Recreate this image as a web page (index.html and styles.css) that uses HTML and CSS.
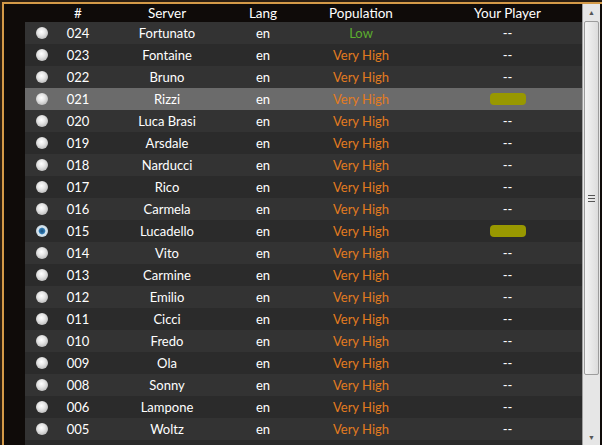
FILE: index.html
```html
<!DOCTYPE html>
<html lang="en">
<head>
    <meta charset="UTF-8">
    <title>Server list</title>
    <link rel="stylesheet" href="styles.css">
</head>
<body>
    <div class="frame">
        <div class="list">
            <div class="row head">
                <div class="c-radio"></div>
                <div class="c-num">#</div>
                <div class="c-server">Server</div>
                <div class="c-lang">Lang</div>
                <div class="c-pop">Population</div>
                <div class="c-player">Your Player</div>
            </div>
            <div class="rows">
                <div class="row"><div class="c-radio"><span class="radio"></span></div><div class="c-num">024</div><div class="c-server">Fortunato</div><div class="c-lang">en</div><div class="c-pop low">Low</div><div class="c-player">--</div></div>
                <div class="row"><div class="c-radio"><span class="radio"></span></div><div class="c-num">023</div><div class="c-server">Fontaine</div><div class="c-lang">en</div><div class="c-pop high">Very High</div><div class="c-player">--</div></div>
                <div class="row"><div class="c-radio"><span class="radio"></span></div><div class="c-num">022</div><div class="c-server">Bruno</div><div class="c-lang">en</div><div class="c-pop high">Very High</div><div class="c-player">--</div></div>
                <div class="row hover"><div class="c-radio"><span class="radio"></span></div><div class="c-num">021</div><div class="c-server">Rizzi</div><div class="c-lang">en</div><div class="c-pop high">Very High</div><div class="c-player"><span class="blur"></span></div></div>
                <div class="row"><div class="c-radio"><span class="radio"></span></div><div class="c-num">020</div><div class="c-server">Luca Brasi</div><div class="c-lang">en</div><div class="c-pop high">Very High</div><div class="c-player">--</div></div>
                <div class="row"><div class="c-radio"><span class="radio"></span></div><div class="c-num">019</div><div class="c-server">Arsdale</div><div class="c-lang">en</div><div class="c-pop high">Very High</div><div class="c-player">--</div></div>
                <div class="row"><div class="c-radio"><span class="radio"></span></div><div class="c-num">018</div><div class="c-server">Narducci</div><div class="c-lang">en</div><div class="c-pop high">Very High</div><div class="c-player">--</div></div>
                <div class="row"><div class="c-radio"><span class="radio"></span></div><div class="c-num">017</div><div class="c-server">Rico</div><div class="c-lang">en</div><div class="c-pop high">Very High</div><div class="c-player">--</div></div>
                <div class="row"><div class="c-radio"><span class="radio"></span></div><div class="c-num">016</div><div class="c-server">Carmela</div><div class="c-lang">en</div><div class="c-pop high">Very High</div><div class="c-player">--</div></div>
                <div class="row"><div class="c-radio"><span class="radio checked"></span></div><div class="c-num">015</div><div class="c-server">Lucadello</div><div class="c-lang">en</div><div class="c-pop high">Very High</div><div class="c-player"><span class="blur"></span></div></div>
                <div class="row"><div class="c-radio"><span class="radio"></span></div><div class="c-num">014</div><div class="c-server">Vito</div><div class="c-lang">en</div><div class="c-pop high">Very High</div><div class="c-player">--</div></div>
                <div class="row"><div class="c-radio"><span class="radio"></span></div><div class="c-num">013</div><div class="c-server">Carmine</div><div class="c-lang">en</div><div class="c-pop high">Very High</div><div class="c-player">--</div></div>
                <div class="row"><div class="c-radio"><span class="radio"></span></div><div class="c-num">012</div><div class="c-server">Emilio</div><div class="c-lang">en</div><div class="c-pop high">Very High</div><div class="c-player">--</div></div>
                <div class="row"><div class="c-radio"><span class="radio"></span></div><div class="c-num">011</div><div class="c-server">Cicci</div><div class="c-lang">en</div><div class="c-pop high">Very High</div><div class="c-player">--</div></div>
                <div class="row"><div class="c-radio"><span class="radio"></span></div><div class="c-num">010</div><div class="c-server">Fredo</div><div class="c-lang">en</div><div class="c-pop high">Very High</div><div class="c-player">--</div></div>
                <div class="row"><div class="c-radio"><span class="radio"></span></div><div class="c-num">009</div><div class="c-server">Ola</div><div class="c-lang">en</div><div class="c-pop high">Very High</div><div class="c-player">--</div></div>
                <div class="row"><div class="c-radio"><span class="radio"></span></div><div class="c-num">008</div><div class="c-server">Sonny</div><div class="c-lang">en</div><div class="c-pop high">Very High</div><div class="c-player">--</div></div>
                <div class="row"><div class="c-radio"><span class="radio"></span></div><div class="c-num">006</div><div class="c-server">Lampone</div><div class="c-lang">en</div><div class="c-pop high">Very High</div><div class="c-player">--</div></div>
                <div class="row"><div class="c-radio"><span class="radio"></span></div><div class="c-num">005</div><div class="c-server">Woltz</div><div class="c-lang">en</div><div class="c-pop high">Very High</div><div class="c-player">--</div></div>
                <div class="row"></div>
            </div>
        </div>
        <div class="scrollbar">
            <div class="sb-btn">&#9650;</div>
            <div class="sb-track">
                <div class="sb-thumb"><span class="grip"></span></div>
            </div>
            <div class="sb-btn">&#9660;</div>
        </div>
    </div>
</body>
</html>
```

FILE: styles.css
```css
html, body {
    margin: 0;
    height: 100%;
    overflow: hidden;
}
body {
    background: #2a1e12;
    font-family: Lato, "Open Sans", sans-serif;
    font-size: 13px;
    color: #fff;
}
.frame {
    display: flex;
    margin: 2px 0 0 2px;
    height: 441px;
    border: 2px solid #d49a48;
    border-right: none;
    border-bottom: none;
    background: #0f0b09;
}
.list {
    flex: 1;
    padding-left: 21px;
    overflow: hidden;
}
.row {
    display: flex;
    align-items: center;
    height: 22px;
    text-align: center;
}
.rows .row:nth-child(odd) {
    background: #333333;
}
.rows .row:nth-child(even) {
    background: #2b2b2b;
}
.rows .row.hover {
    background: #6b6b6b;
}
.head {
    height: 18px;
    font-size: 13.5px;
}
.c-radio { width: 34px; display: flex; justify-content: center; }
.c-num { width: 38px; }
.c-server { width: 140px; }
.c-lang { width: 52px; }
.c-pop { width: 144px; }
.c-player { flex: 1; display: flex; justify-content: center; }
.low { color: #5cae2e; }
.high { color: #e37b1f; }
.radio {
    display: block;
    width: 12px;
    height: 12px;
    border-radius: 50%;
    background: radial-gradient(circle at 45% 40%, #ffffff 0%, #e8e8e8 35%, #a4a4a4 100%);
}
.radio.checked {
    background: radial-gradient(circle, #1d4f78 0%, #2f7ab4 32%, #d8e8f2 45%, #b8c4cc 100%);
}
.blur {
    display: block;
    width: 36px;
    height: 12px;
    border-radius: 4px;
    background: #989800;
}
.scrollbar {
    width: 17px;
    margin-right: 2px;
    display: flex;
    flex-direction: column;
    background: #e6e6e6;
    border-left: 1px solid #a0a0a0;
}
.sb-btn {
    height: 16px;
    font-size: 7px;
    line-height: 16px;
    text-align: center;
    color: #555;
}
.sb-track {
    flex: 1;
    padding-top: 1px;
}
.sb-thumb {
    height: 352px;
    margin: 0 1px;
    border: 1px solid #9c9c9c;
    border-radius: 2px;
    background: linear-gradient(to right, #f4f4f4, #dcdcdc);
    display: flex;
    align-items: center;
    justify-content: center;
}
.grip {
    display: block;
    width: 7px;
    height: 7px;
    background: repeating-linear-gradient(to bottom, #555 0 1px, transparent 1px 3px);
}
```
